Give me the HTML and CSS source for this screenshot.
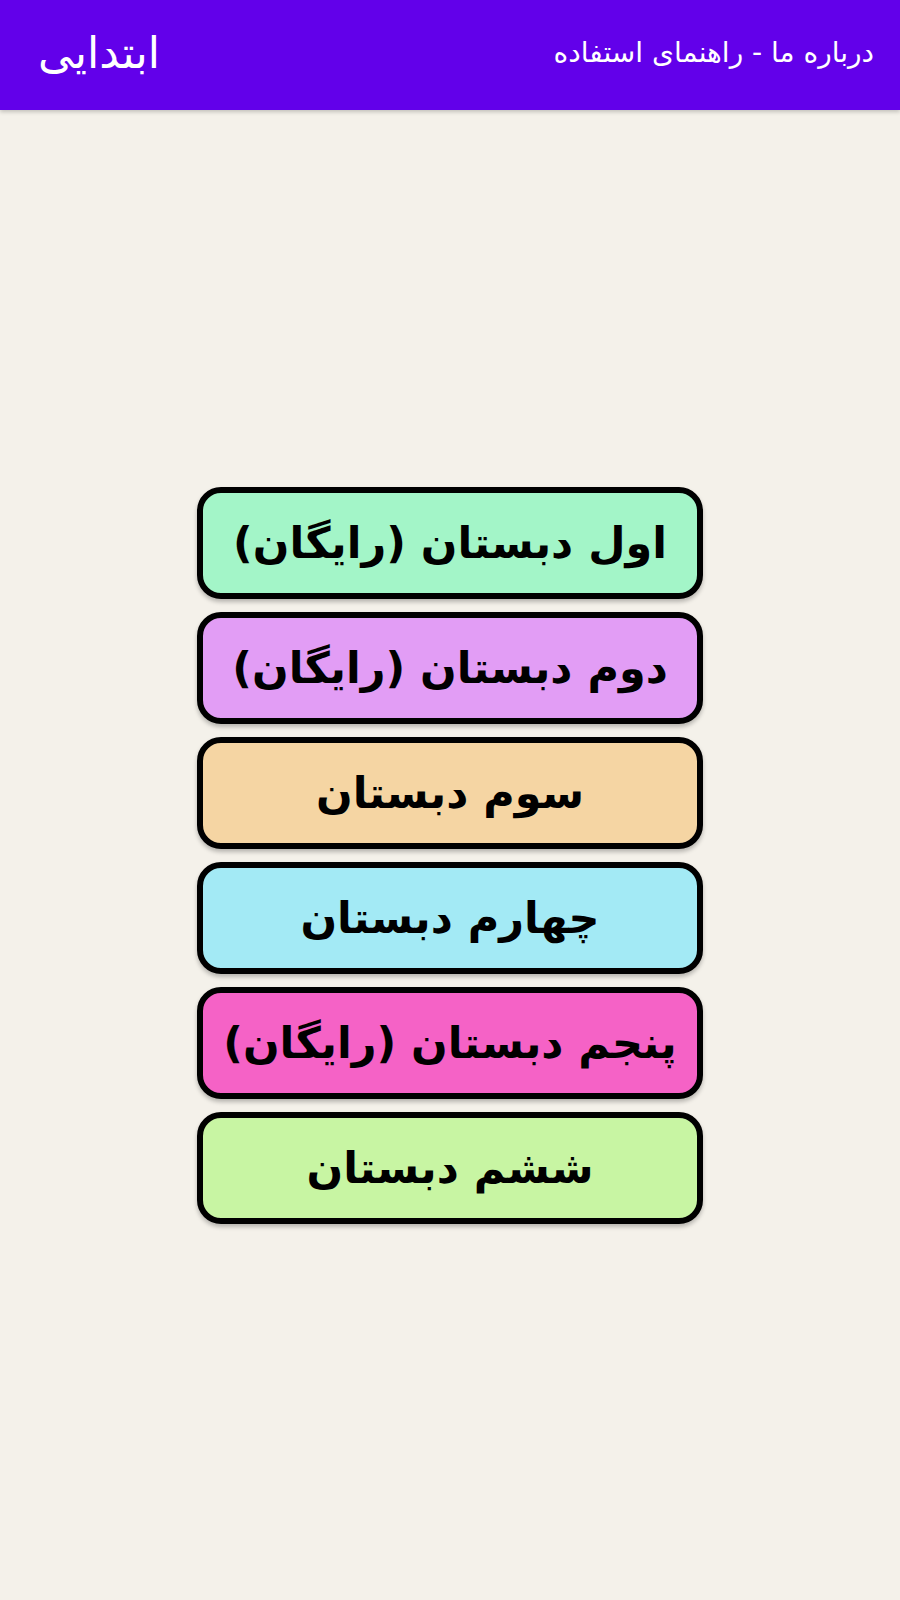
FILE: index.html
```html
<!DOCTYPE html>
<html lang="fa" dir="rtl">
<head>
<meta charset="utf-8">
<title>ابتدایی</title>
<link rel="stylesheet" href="styles.css">
</head>
<body>
<div class="app">
  <header class="topbar">
    <div class="links">درباره ما - راهنمای استفاده</div>
    <div class="title">ابتدایی</div>
  </header>
  <main class="content">
    <div class="menu">
      <button class="grade g1">اول دبستان (رایگان)</button>
      <button class="grade g2">دوم دبستان (رایگان)</button>
      <button class="grade g3">سوم دبستان</button>
      <button class="grade g4">چهارم دبستان</button>
      <button class="grade g5">پنجم دبستان (رایگان)</button>
      <button class="grade g6">ششم دبستان</button>
    </div>
  </main>
</div>
</body>
</html>
```

FILE: styles.css
```css
html, body {
  margin: 0;
  padding: 0;
}
body {
  background: #f4f1ea;
  font-family: "DejaVu Sans", "Noto Sans", sans-serif;
}
.app {
  display: flex;
  flex-direction: column;
  min-height: 1600px;
}
.topbar {
  height: 110px;
  background: #6200ea;
  color: #ffffff;
  display: flex;
  align-items: center;
  justify-content: space-between;
  padding: 0 26px 6px 38px;
  box-sizing: border-box;
  box-shadow: 0 2px 4px rgba(0,0,0,0.2);
}
.links {
  font-size: 28px;
  font-family: "DejaVu Sans", sans-serif;
}
.title {
  font-size: 44px;
  font-family: "DejaVu Sans", sans-serif;
}
.content {
  flex: 1;
  display: flex;
  align-items: center;
  justify-content: center;
}
.menu {
  display: flex;
  flex-direction: column;
  gap: 13px;
  width: 506px;
}
.grade {
  height: 112px;
  box-sizing: border-box;
  border: 6px solid #000000;
  border-radius: 24px;
  font-family: "DejaVu Sans", sans-serif;
  font-weight: bold;
  font-size: 43px;
  color: #000000;
  box-shadow: 0 3px 4px rgba(0,0,0,0.25);
  word-spacing: 0;
  padding: 0;
}
.g1 { background: #a3f5c8; }
.g2 { background: #e29df5; }
.g3 { background: #f5d5a3; }
.g4 { background: #a3eaf5; }
.g5 { background: #f562c6; }
.g6 { background: #c8f5a3; }
```
